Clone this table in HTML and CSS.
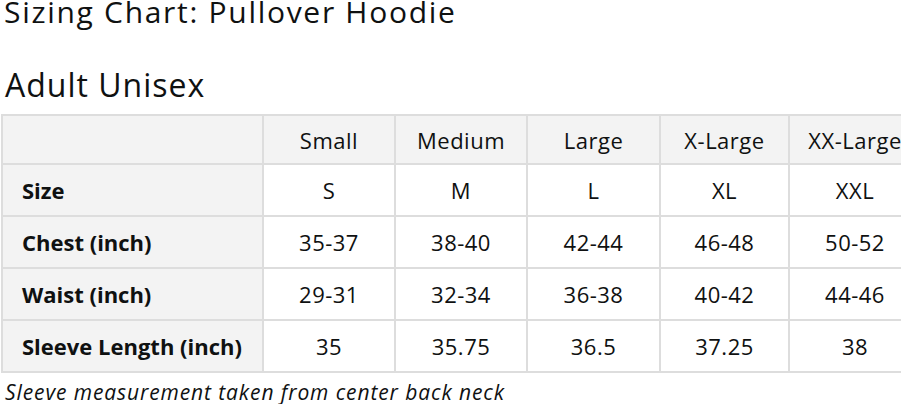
FILE: index.html
```html
<!DOCTYPE html>
<html>
<head>
<meta charset="utf-8">
<link rel="stylesheet" href="styles.css">
</head>
<body>
<div class="page">
  <h1 class="title">Sizing Chart: Pullover Hoodie</h1>
  <h2 class="subtitle">Adult Unisex</h2>
  <table class="chart">
    <colgroup>
      <col class="c-label">
      <col class="c-a">
      <col class="c-a">
      <col class="c-b">
      <col class="c-c">
      <col class="c-a">
    </colgroup>
    <thead>
      <tr class="head">
        <th></th>
        <th>Small</th>
        <th>Medium</th>
        <th>Large</th>
        <th>X-Large</th>
        <th>XX-Large</th>
      </tr>
    </thead>
    <tbody>
      <tr class="r1">
        <th class="label">Size</th>
        <td>S</td><td>M</td><td>L</td><td>XL</td><td>XXL</td>
      </tr>
      <tr class="r2">
        <th class="label">Chest (inch)</th>
        <td>35-37</td><td>38-40</td><td>42-44</td><td>46-48</td><td>50-52</td>
      </tr>
      <tr class="r3">
        <th class="label">Waist (inch)</th>
        <td>29-31</td><td>32-34</td><td>36-38</td><td>40-42</td><td>44-46</td>
      </tr>
      <tr class="r4">
        <th class="label">Sleeve Length (inch)</th>
        <td>35</td><td>35.75</td><td>36.5</td><td>37.25</td><td>38</td>
      </tr>
    </tbody>
  </table>
  <p class="note">Sleeve measurement taken from center back neck</p>
</div>
</body>
</html>
```

FILE: styles.css
```css
html, body {
  margin: 0;
  padding: 0;
  background: #fff;
  overflow: hidden;
}
body {
  font-family: "Open Sans", "Noto Sans", sans-serif;
  color: #0f1111;
}
.page {
  width: 901px;
  height: 404px;
  overflow: hidden;
}
.title {
  margin: 0;
  padding: 0 0 0 4px;
  font-size: 30px;
  font-weight: 400;
  letter-spacing: 1.7px;
  line-height: 24px;
  height: 24px;
}
.subtitle {
  margin: 41px 0 0 0;
  padding: 0 0 0 5px;
  font-size: 32px;
  font-weight: 400;
  letter-spacing: 1px;
  line-height: 40px;
  height: 40px;
}
.chart {
  border-collapse: collapse;
  table-layout: fixed;
  width: 920px;
  margin: 9px 0 0 1px;
  font-size: 22px;
  letter-spacing: 0.5px;
}
.c-label { width: 261px; }
.c-a { width: 132px; }
.c-b { width: 133px; }
.c-c { width: 129px; }
.chart th, .chart td {
  border: 2px solid #dddddd;
  padding: 0;
  text-align: center;
  font-weight: 400;
  white-space: nowrap;
  overflow: hidden;
}
.head th {
  background: #f3f3f3;
  height: 47px;
}
.chart tbody td, .chart tbody th {
  height: 50px;
}
.chart .label {
  background: #f3f3f3;
  text-align: left;
  font-weight: 700;
  letter-spacing: 0;
  padding-left: 19px;
}
.note {
  margin: 5px 0 0 0;
  padding-left: 5px;
  font-style: italic;
  font-size: 21px;
  letter-spacing: 0.9px;
  line-height: 28px;
}
```
